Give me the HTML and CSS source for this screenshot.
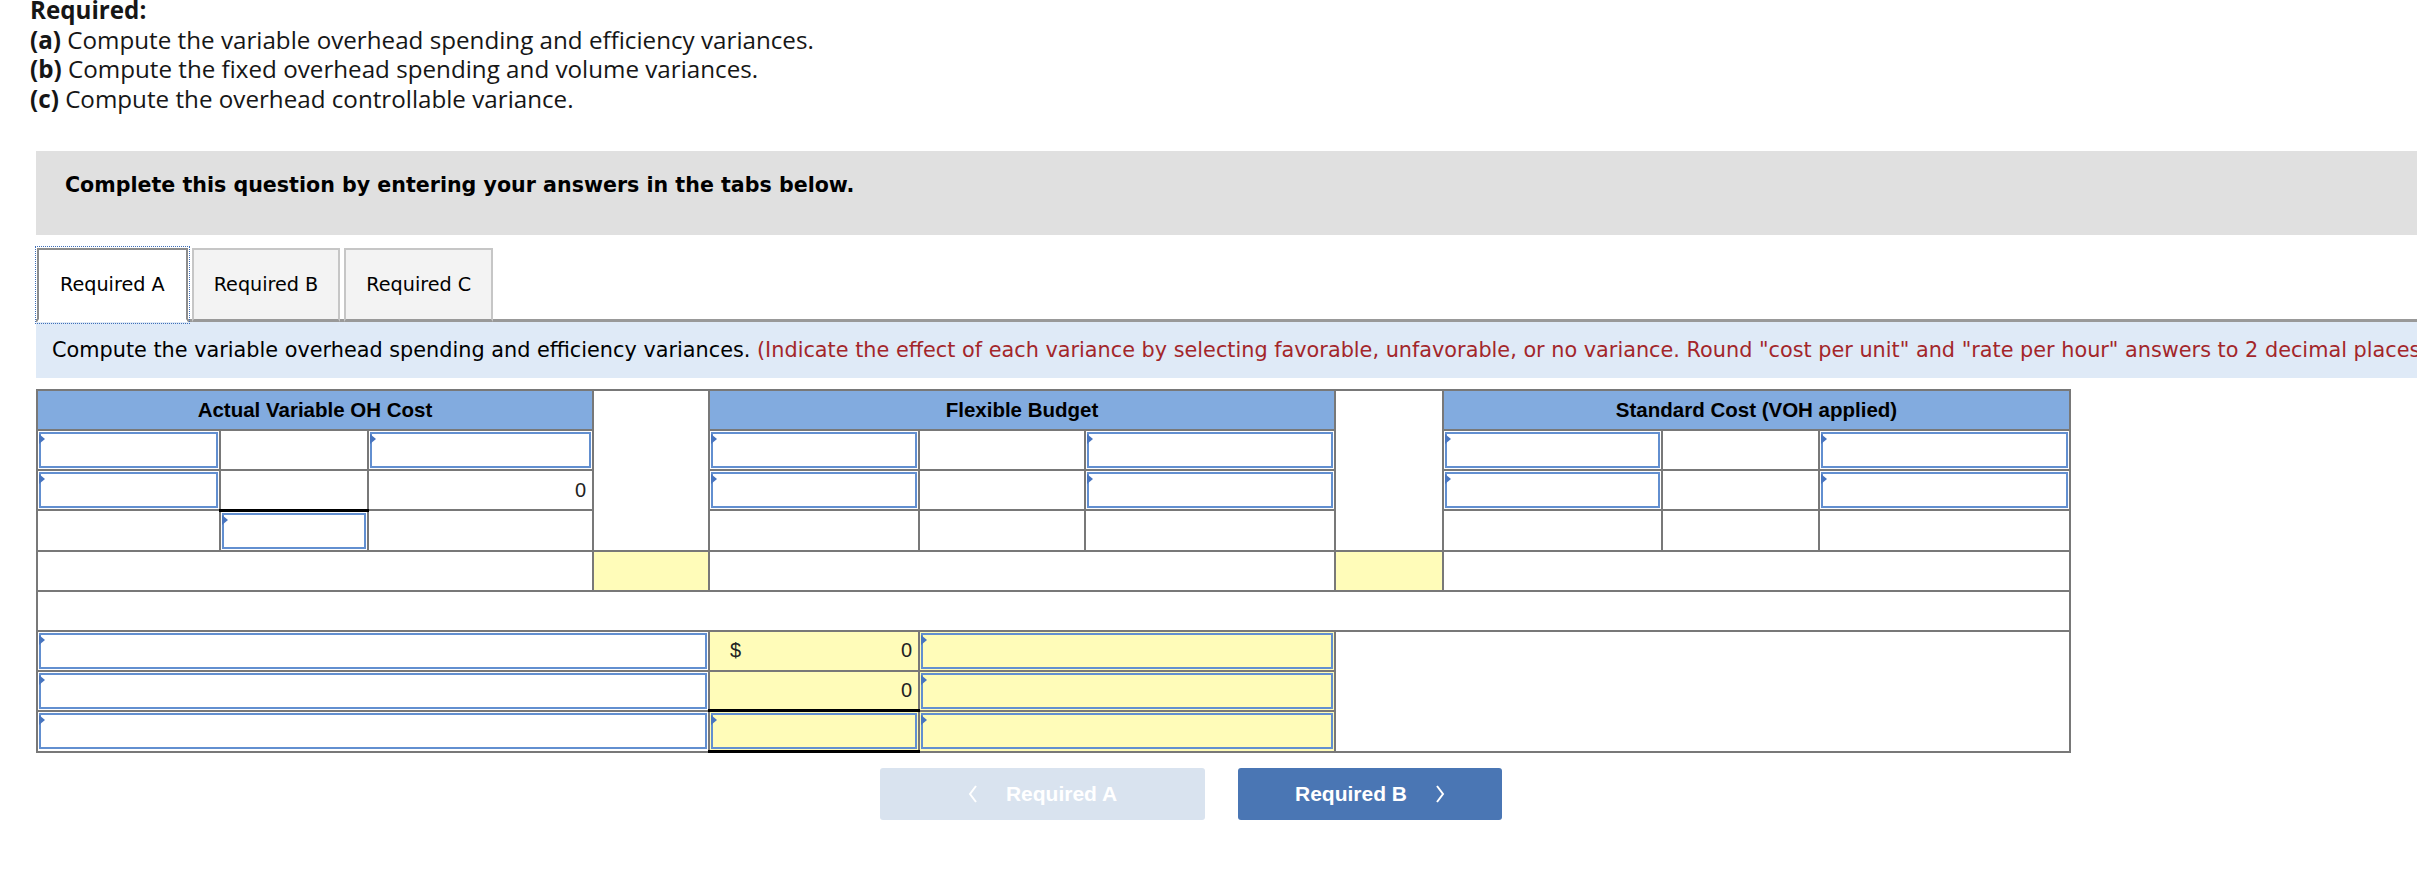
FILE: index.html
```html
<!DOCTYPE html>
<html lang="en">
<head>
  <meta charset="UTF-8">
  <meta name="viewport" content="width=device-width, initial-scale=1.0">
  <title>Variable Overhead Variances</title>
  <link rel="stylesheet" href="styles.css">
</head>
<body>

  <div class="page">
    <div class="required">
      <p class="required-title">Required:</p>
      <p><b>(a)</b> Compute the variable overhead spending and efficiency variances.</p>
      <p><b>(b)</b> Compute the fixed overhead spending and volume variances.</p>
      <p><b>(c)</b> Compute the overhead controllable variance.</p>
    </div>

    <div class="question">
      <div class="banner">Complete this question by entering your answers in the tabs below.</div>

      <div class="tabs">
        <button class="tab active">Required A</button>
        <button class="tab">Required B</button>
        <button class="tab">Required C</button>
      </div>

      <div class="instructions">
        Compute the variable overhead spending and efficiency variances.
        <span class="note">(Indicate the effect of each variance by selecting favorable, unfavorable, or no variance. Round "cost per unit" and "rate per hour" answers to 2 decimal places.)</span>
      </div>

      <table class="worksheet">
        <colgroup>
          <col style="width: 183px">
          <col style="width: 148px">
          <col style="width: 225px">
          <col style="width: 116px">
          <col style="width: 210px">
          <col style="width: 166px">
          <col style="width: 250px">
          <col style="width: 108px">
          <col style="width: 219px">
          <col style="width: 157px">
          <col style="width: 251px">
        </colgroup>
        <tr>
          <th colspan="3">Actual Variable OH Cost</th>
          <td class="gap" rowspan="4"></td>
          <th colspan="3">Flexible Budget</th>
          <td class="gap" rowspan="4"></td>
          <th colspan="3">Standard Cost (VOH applied)</th>
        </tr>
        <tr>
          <td class="entry"><div class="field"><input type="text"></div></td>
          <td></td>
          <td class="entry"><div class="field"><input type="text"></div></td>
          <td class="entry"><div class="field"><input type="text"></div></td>
          <td></td>
          <td class="entry"><div class="field"><input type="text"></div></td>
          <td class="entry"><div class="field"><input type="text"></div></td>
          <td></td>
          <td class="entry"><div class="field"><input type="text"></div></td>
        </tr>
        <tr>
          <td class="entry"><div class="field"><input type="text"></div></td>
          <td class="total"></td>
          <td class="num">0</td>
          <td class="entry"><div class="field"><input type="text"></div></td>
          <td></td>
          <td class="entry"><div class="field"><input type="text"></div></td>
          <td class="entry"><div class="field"><input type="text"></div></td>
          <td></td>
          <td class="entry"><div class="field"><input type="text"></div></td>
        </tr>
        <tr>
          <td></td>
          <td class="entry"><div class="field"><input type="text"></div></td>
          <td></td>
          <td></td>
          <td></td>
          <td></td>
          <td></td>
          <td></td>
          <td></td>
        </tr>
        <tr>
          <td colspan="3"></td>
          <td class="calc"></td>
          <td colspan="3"></td>
          <td class="calc"></td>
          <td colspan="3"></td>
        </tr>
        <tr>
          <td colspan="11"></td>
        </tr>
        <tr>
          <td class="entry" colspan="4"><div class="field"><input type="text"></div></td>
          <td class="calc num"><span class="dollar">$</span>0</td>
          <td class="calc entry" colspan="2"><div class="field"><input type="text"></div></td>
          <td colspan="4" rowspan="3"></td>
        </tr>
        <tr>
          <td class="entry" colspan="4"><div class="field"><input type="text"></div></td>
          <td class="calc num total">0</td>
          <td class="calc entry" colspan="2"><div class="field"><input type="text"></div></td>
        </tr>
        <tr>
          <td class="entry" colspan="4"><div class="field"><input type="text"></div></td>
          <td class="calc entry total"><div class="field"><input type="text"></div></td>
          <td class="calc entry" colspan="2"><div class="field"><input type="text"></div></td>
        </tr>
      </table>

      <div class="nav">
        <button class="nav-button prev">
          <svg width="10" height="18" viewBox="0 0 10 18"><polyline points="8,1 2,9 8,17" fill="none" stroke="#fff" stroke-width="2"/></svg>
          Required A
        </button>
        <button class="nav-button next">
          Required B
          <svg width="10" height="18" viewBox="0 0 10 18"><polyline points="2,1 8,9 2,17" fill="none" stroke="#fff" stroke-width="2"/></svg>
        </button>
      </div>
    </div>
  </div>

</body>
</html>
```

FILE: styles.css
```css
body {
  margin: 0;
  background-color: #ffffff;
  color: #000;
  overflow: hidden;
}
.page {
  width: 2560px;
  margin-top: -5px;
}
.required {
  padding-left: 30px;
  font-family: "Open Sans", "Liberation Sans", sans-serif;
  font-size: 24.2px;
  line-height: 29.5px;
  color: #161616;
}
.required p {
  margin: 0;
}
.required-title {
  font-weight: bold;
}
.question {
  margin: 38px 0 0 36px;
}
.banner {
  height: 84px;
  box-sizing: border-box;
  padding: 22px 0 0 29px;
  background-color: #e0e0e0;
  font-family: "DejaVu Sans", Verdana, sans-serif;
  font-weight: bold;
  font-size: 20.6px;
  line-height: 24px;
}
.tabs {
  display: flex;
  gap: 4px;
  margin-top: 13px;
  border-bottom: 3px solid #999;
  padding-left: 1px;
}
.tab {
  height: 74px;
  margin-bottom: -3px;
  padding: 0 20px;
  background-color: #f3f3f3;
  border: 2px solid #c6c6c6;
  border-bottom: 3px solid #999;
  font-family: "DejaVu Sans", Verdana, sans-serif;
  font-size: 19.2px;
  color: #000;
  cursor: pointer;
}
.tab.active {
  padding: 0 21px;
  background-color: #fff;
  border-color: #8c8c8c;
  border-bottom-color: #fff;
  outline: 1px dotted #3f6fb8;
  outline-offset: 1px;
}
.instructions {
  height: 56px;
  padding-left: 16px;
  background-color: #dfeaf7;
  font-family: "DejaVu Sans", Verdana, sans-serif;
  font-size: 20.8px;
  line-height: 56px;
  white-space: nowrap;
  overflow: hidden;
}
.note {
  color: #a3262a;
}
.worksheet {
  margin-top: 11px;
  table-layout: fixed;
  width: 2034px;
  border-collapse: collapse;
  border: 2px solid #787878;
  font-family: "Liberation Sans", Arial, sans-serif;
}
.worksheet tr {
  height: 40px;
}
.worksheet th,
.worksheet td {
  border: 2px solid #787878;
  padding: 0;
}
.worksheet th {
  background-color: #82abdf;
  font-size: 20.5px;
  font-weight: bold;
}
.worksheet td.gap {
  background-color: #fff;
}
.worksheet td.calc {
  background-color: #fffcb9;
}
.worksheet td.num {
  padding-right: 6px;
  text-align: right;
  font-size: 20px;
  color: #222;
}
.worksheet td.total {
  border-bottom: 3px solid #000;
}
.dollar {
  float: left;
  padding-left: 20px;
}
.worksheet td.entry {
  padding: 1px;
}
.field {
  position: relative;
}
.field input {
  display: block;
  width: 100%;
  height: 36px;
  box-sizing: border-box;
  margin: 0;
  border: 2px solid #628fd0;
  background-color: transparent;
  font-size: 18px;
}
.field::before {
  content: "";
  position: absolute;
  left: 0;
  top: 2px;
  border-left: 6px solid #4875bf;
  border-top: 5px solid transparent;
  border-bottom: 5px solid transparent;
}
.nav {
  display: flex;
  gap: 33px;
  margin-top: 15px;
  padding-left: 844px;
}
.nav-button {
  display: flex;
  align-items: center;
  justify-content: center;
  gap: 28px;
  height: 52px;
  border: none;
  border-radius: 3px;
  font-family: "Liberation Sans", Arial, sans-serif;
  font-size: 21px;
  font-weight: bold;
  color: #fff;
  cursor: pointer;
}
.prev {
  width: 325px;
  background-color: #d9e3ef;
}
.next {
  width: 264px;
  background-color: #4a76b4;
}
```
